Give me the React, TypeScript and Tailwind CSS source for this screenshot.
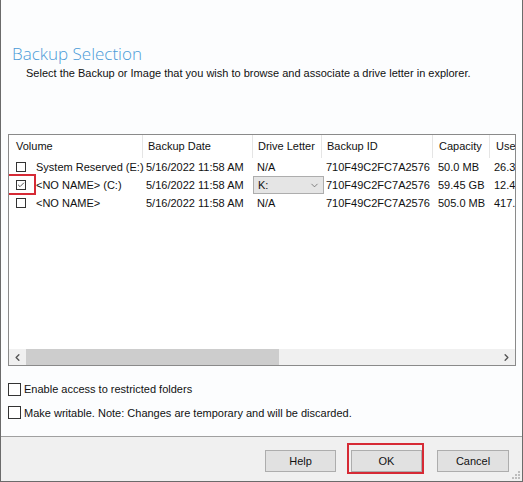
import { ChevronLeft, ChevronRight, ChevronDown, Check } from "lucide-react";

const columns = [
  { label: "Volume", w: "w-[134px]", pad: "pl-[7px]" },
  { label: "Backup Date", w: "w-[110px]", pad: "pl-[5px]" },
  { label: "Drive Letter", w: "w-[69px]", pad: "pl-[5px]" },
  { label: "Backup ID", w: "w-[111px]", pad: "pl-[5px]" },
  { label: "Capacity", w: "w-[57px]", pad: "pl-[6px]" },
  { label: "Used", w: "w-[40px]", pad: "pl-[6px]" },
];

const rows = [
  { name: "System Reserved (E:)", date: "5/16/2022 11:58 AM", drive: "N/A", id: "710F49C2FC7A2576", cap: "50.0 MB", used: "26.3", checked: false },
  { name: "<NO NAME> (C:)", date: "5/16/2022 11:58 AM", drive: "K:", id: "710F49C2FC7A2576", cap: "59.45 GB", used: "12.4", checked: true },
  { name: "<NO NAME>", date: "5/16/2022 11:58 AM", drive: "N/A", id: "710F49C2FC7A2576", cap: "505.0 MB", used: "417.", checked: false },
];

function SmallBox({ checked }: { checked: boolean }) {
  return (
    <span className="flex h-[10px] w-[10px] shrink-0 items-center justify-center border border-[#333] bg-white">
      {checked && <Check className="h-[8px] w-[8px] text-[#555]" strokeWidth={3} />}
    </span>
  );
}

export default function App() {
  return (
    <div
      className="relative flex h-[482px] w-[523px] flex-col border-x border-b border-[#6b6b6b] bg-[#fcfdfe] text-[11px] text-[#111]"
      style={{ fontFamily: '"Liberation Sans", Arial, sans-serif' }}
    >
      <div className="pl-[11px] pt-[42px]">
        <h1
          className="text-[17px] font-light leading-[23px] text-[#4b9bd8]"
          style={{ fontFamily: '"Open Sans", "Noto Sans", sans-serif' }}
        >
          Backup Selection
        </h1>
        <p className="pl-[14px] leading-[16px]">
          Select the Backup or Image that you wish to browse and associate a drive letter in explorer.
        </p>
      </div>

      {/* list view */}
      <div className="ml-[7px] mt-[53px] flex h-[232px] w-[508px] flex-col overflow-hidden border border-[#8a8a8a] bg-white">
        <div className="flex-1 overflow-hidden">
          <div className="flex h-[23px] items-center">
            {columns.map((c, i) => (
              <div
                key={c.label}
                className={`${c.w} ${c.pad} flex h-full shrink-0 items-center ${
                  i < columns.length - 1 ? "border-r border-[#e5e5e5]" : ""
                } whitespace-nowrap`}
              >
                {c.label}
              </div>
            ))}
          </div>
          {rows.map((r) => (
            <div key={r.name} className="flex h-[18px] items-center whitespace-nowrap">
              <div className="relative flex w-[134px] shrink-0 items-center pl-[7px]">
                <SmallBox checked={r.checked} />
                <span className="ml-[10px]">{r.name}</span>
                {r.checked && (
                  <span className="absolute left-[-2px] top-[-3px] h-[21px] w-[29px] border-2 border-[#d62a35]" />
                )}
              </div>
              <div className="w-[110px] shrink-0 pl-[3px]">{r.date}</div>
              <div className="w-[69px] shrink-0">
                {r.drive === "K:" ? (
                  <div className="flex h-[18px] w-[71px] items-center justify-between border border-[#adadad] bg-[#e5e5e5] pl-[4px] pr-[3px]">
                    <span>K:</span>
                    <ChevronDown className="h-[11px] w-[11px] text-[#555]" strokeWidth={1.5} />
                  </div>
                ) : (
                  <span className="pl-[4px]">{r.drive}</span>
                )}
              </div>
              <div className="w-[111px] shrink-0 pl-[4px]">{r.id}</div>
              <div className="w-[57px] shrink-0 pl-[5px]">{r.cap}</div>
              <div className="w-[25px] shrink-0 overflow-hidden pl-[4px]">{r.used}</div>
            </div>
          ))}
        </div>
        {/* horizontal scrollbar */}
        <div className="flex h-[16px] shrink-0 items-center bg-[#f0f0f0]">
          <div className="flex w-[17px] justify-center">
            <ChevronLeft className="h-[11px] w-[11px] text-[#555]" strokeWidth={3} />
          </div>
          <div className="h-[16px] w-[253px] bg-[#cdcdcd]" />
          <div className="flex-1" />
          <div className="flex w-[17px] justify-center">
            <ChevronRight className="h-[11px] w-[11px] text-[#555]" strokeWidth={3} />
          </div>
        </div>
      </div>

      <div className="mt-[15px] flex flex-col gap-[7px] pl-[7px]">
        <label className="flex items-center gap-[3px]">
          <span className="h-[13px] w-[13px] border border-[#333] bg-white" />
          <span>Enable access to restricted folders</span>
        </label>
        <label className="flex items-center gap-[3px]">
          <span className="h-[13px] w-[13px] border border-[#333] bg-white" />
          <span>Make writable. Note: Changes are temporary and will be discarded.</span>
        </label>
      </div>

      <div className="mt-auto flex h-[45px] items-start justify-end gap-[15px] border-t border-[#a0a0a0] bg-[#f0f0f0] pr-[13px] pt-[13px]">
        <button className="h-[22px] w-[71px] border border-[#adadad] bg-[#e1e1e1]">Help</button>
        <div className="relative">
          <button className="h-[22px] w-[71px] border border-[#adadad] bg-[#e1e1e1]">OK</button>
          <span className="absolute left-[-4px] top-[-7px] h-[31px] w-[77px] border-2 border-[#d62a35]" />
        </div>
        <button className="h-[22px] w-[72px] border border-[#adadad] bg-[#e1e1e1]">Cancel</button>
      </div>

      {/* size grip */}
      <svg className="absolute bottom-[2px] right-[2px]" width="10" height="10" viewBox="0 0 10 10">
        <g fill="#bdbdbd">
          <rect x="8" y="2" width="2" height="2" />
          <rect x="5" y="5" width="2" height="2" />
          <rect x="8" y="5" width="2" height="2" />
          <rect x="2" y="8" width="2" height="2" />
          <rect x="5" y="8" width="2" height="2" />
          <rect x="8" y="8" width="2" height="2" />
        </g>
      </svg>
    </div>
  );
}
